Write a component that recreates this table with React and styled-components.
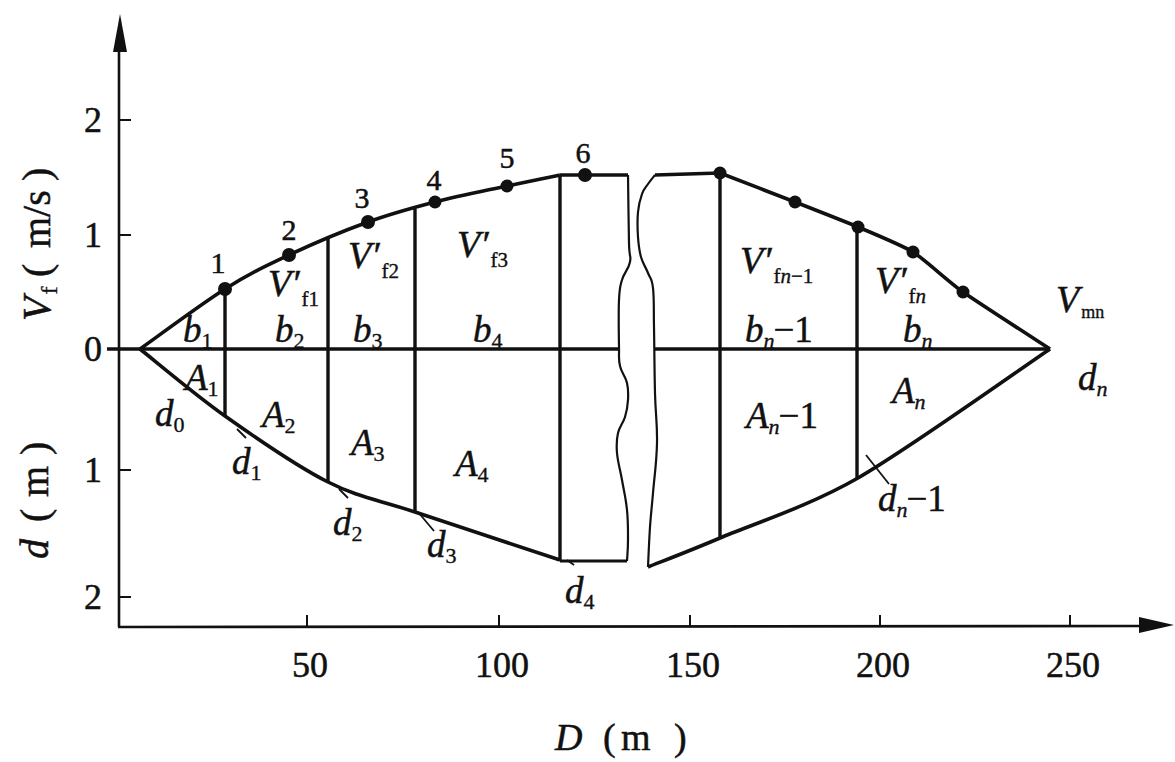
import React from "react";
import styled, { createGlobalStyle } from "styled-components";

const GlobalStyle = createGlobalStyle`
  html, body { margin: 0; padding: 0; background: #ffffff; }
  #root { width: 1175px; height: 762px; }
`;

const Figure = styled.figure`
  margin: 0;
  width: 1175px;
  height: 762px;
  background: #ffffff;
  overflow: hidden;
`;

const Chart = styled.svg`
  display: block;
  width: 1175px;
  height: 762px;
`;

const Stroke = styled.path`
  fill: none;
  stroke: #111;
  stroke-width: ${(p) => p.$w || 3.5}px;
  stroke-linejoin: round;
  stroke-linecap: butt;
`;

const Arrow = styled.polygon`
  fill: #111;
`;

const Dot = styled.circle`
  fill: #111;
`;

const Serif = styled.text`
  font-family: "Liberation Serif", "Times New Roman", serif;
  font-size: ${(p) => p.$size || 36}px;
  font-style: ${(p) => (p.$italic ? "italic" : "normal")};
  fill: #111;
  stroke: #111;
  stroke-width: ${(p) => p.$bold || 0.5}px;
  text-anchor: ${(p) => p.$anchor || "start"};
`;

const Sub = styled.tspan`
  font-size: ${(p) => p.$size || 22}px;
  font-style: ${(p) => (p.$italic ? "italic" : "normal")};
  stroke-width: 0.35px;
`;

const Plain = styled.tspan`
  font-style: normal;
`;

const Ital = styled.tspan`
  font-style: italic;
`;

/* smooth path through points (Catmull-Rom -> cubic Bezier) */
function smooth(pts, t = 0.5) {
  let d = `M${pts[0][0]},${pts[0][1]}`;
  for (let i = 0; i < pts.length - 1; i++) {
    const p0 = pts[i - 1] || pts[i];
    const p1 = pts[i];
    const p2 = pts[i + 1];
    const p3 = pts[i + 2] || p2;
    const c1x = p1[0] + ((p2[0] - p0[0]) / 6) * t * 2;
    const c1y = p1[1] + ((p2[1] - p0[1]) / 6) * t * 2;
    const c2x = p2[0] - ((p3[0] - p1[0]) / 6) * t * 2;
    const c2y = p2[1] - ((p3[1] - p1[1]) / 6) * t * 2;
    d += ` C${c1x.toFixed(1)},${c1y.toFixed(1)} ${c2x.toFixed(1)},${c2y.toFixed(1)} ${p2[0]},${p2[1]}`;
  }
  return d;
}

const line = (pts) => "M" + pts.map((p) => p.join(",")).join(" L");

const ZERO = 349;
const AX = 119;
const AY = 627;

const upperLeft = [
  [140, ZERO],
  [225, 289],
  [289, 255],
  [368, 222],
  [435, 202],
  [507, 186],
  [560, 175],
];
const lowerLeft = [
  [140, ZERO],
  [225, 416],
  [328, 482],
  [415, 512],
  [560, 560],
];
const upperRight = [
  [720, 173],
  [795, 202],
  [858, 227],
  [913, 252],
  [963, 292],
  [1050, ZERO],
];
const lowerRight = [
  [648, 567],
  [720, 538],
  [858, 478],
  [1050, ZERO],
];

const breakLeft = [
  [628, 175],
  [629, 243],
  [630, 262],
  [622, 280],
  [619, 300],
  [619, 347],
  [620, 366],
  [627, 383],
  [628, 400],
  [625, 417],
  [618, 433],
  [617, 453],
  [622, 480],
  [627, 510],
  [628, 540],
  [627, 561],
];
const breakRight = [
  [655, 175],
  [648, 184],
  [642, 194],
  [638, 212],
  [638, 237],
  [641, 257],
  [648, 273],
  [653, 288],
  [654, 327],
  [655, 393],
  [657, 443],
  [653, 493],
  [650, 527],
  [648, 567],
];

const verticals = [
  { x: 225, top: 289, bottom: 416 },
  { x: 328, top: 238, bottom: 482 },
  { x: 415, top: 209, bottom: 512 },
  { x: 560, top: 175, bottom: 561 },
  { x: 720, top: 173, bottom: 538 },
  { x: 857, top: 227, bottom: 478 },
];

const dots = [
  [225, 289, 7],
  [289, 255, 7],
  [368, 222, 7],
  [435, 202, 6.5],
  [507, 186, 6.5],
  [585, 175, 7],
  [720, 173, 6.5],
  [795, 202, 6.5],
  [858, 227, 6.5],
  [913, 252, 6.5],
  [963, 292, 6.5],
];

const pointNumbers = [
  { n: "1", x: 218, y: 273 },
  { n: "2", x: 289, y: 240 },
  { n: "3", x: 362, y: 208 },
  { n: "4", x: 434, y: 190 },
  { n: "5", x: 507, y: 168 },
  { n: "6", x: 583, y: 163 },
];

const yTicks = [
  { label: "2", y: 120 },
  { label: "1", y: 235 },
  { label: "0", y: ZERO },
  { label: "1", y: 470 },
  { label: "2", y: 597 },
];

const xTicks = [
  { label: "50", x: 307 },
  { label: "100", x: 499 },
  { label: "150", x: 690 },
  { label: "200", x: 880 },
  { label: "250", x: 1070 },
];

/* variable labels: main letter, subscript, optional trailing text */
const varLabels = [
  { m: "b", s: "1", x: 183, y: 342 },
  { m: "b", s: "2", x: 275, y: 342 },
  { m: "b", s: "3", x: 353, y: 342 },
  { m: "b", s: "4", x: 473, y: 342 },
  { m: "b", s: "n", si: true, tail: "−1", x: 745, y: 342 },
  { m: "b", s: "n", si: true, x: 903, y: 342 },
  { m: "A", s: "1", x: 185, y: 390 },
  { m: "A", s: "2", x: 262, y: 427 },
  { m: "A", s: "3", x: 351, y: 455 },
  { m: "A", s: "4", x: 455, y: 476 },
  { m: "A", s: "n", si: true, tail: "−1", x: 746, y: 428 },
  { m: "A", s: "n", si: true, x: 892, y: 403 },
  { m: "d", s: "0", x: 155, y: 426 },
  { m: "d", s: "1", x: 232, y: 474 },
  { m: "d", s: "2", x: 333, y: 535 },
  { m: "d", s: "3", x: 427, y: 557 },
  { m: "d", s: "4", x: 565, y: 603 },
  { m: "d", s: "n", si: true, x: 1078, y: 390 },
  { m: "d", s: "n", si: true, tail: "−1", x: 878, y: 511 },
];

const velLabels = [
  { x: 268, y: 296, sub: "1" },
  { x: 348, y: 268, sub: "2" },
  { x: 457, y: 257, sub: "3" },
  { x: 740, y: 273, sub: "n", tail: "−1" },
  { x: 875, y: 293, sub: "n" },
];

const leaders = [
  [[237, 429], [246, 438]],
  [[339, 489], [348, 498]],
  [[418, 512], [434, 531]],
  [[567, 560], [574, 565]],
  [[866, 455], [889, 484]],
];

function VarLabel({ m, s, si, tail, x, y }) {
  return (
    <Serif x={x} y={y} $italic $size={37}>
      {m}
      <Sub dy={6} $italic={si} $size={22}>
        {s}
      </Sub>
      {tail ? (
        <Plain dy={-6} dx={-1}>
          {tail}
        </Plain>
      ) : null}
    </Serif>
  );
}

function VelLabel({ x, y, sub, tail }) {
  const italicSub = sub === "n";
  return (
    <Serif x={x} y={y} $italic $size={38}>
      {"V′"}
      <Sub dy={10} dx={2} $size={21}>
        <Plain>f</Plain>
        {italicSub ? <Ital>{sub}</Ital> : <Plain>{sub}</Plain>}
        {tail ? <Plain>{tail}</Plain> : null}
      </Sub>
    </Serif>
  );
}

export default function App() {
  return (
    <>
      <GlobalStyle />
      <Figure>
        <Chart viewBox="0 0 1175 762" xmlns="http://www.w3.org/2000/svg">
          {/* axes */}
          <Stroke $w={2.6} d={line([[AX, AY], [AX, 46]])} />
          <Arrow points={`${AX + 1},14 ${AX - 6},52 ${AX + 8},52`} />
          <Stroke $w={2.6} d={line([[AX - 1, AY], [1145, AY - 1]])} />
          <Arrow points={`1174,625 1139,617 1139,633`} />

          {yTicks.map((t, i) =>
            t.label === "0" ? null : (
              <Stroke key={"yt" + i} $w={2} d={line([[AX, t.y], [AX + 12, t.y]])} />
            )
          )}
          {xTicks.map((t, i) => (
            <Stroke key={"xt" + i} $w={2} d={line([[t.x, AY], [t.x, AY - 12]])} />
          ))}

          {/* zero line, broken at the gap */}
          <Stroke $w={3.5} d={line([[107, ZERO], [619, ZERO]])} />
          <Stroke $w={3.5} d={line([[655, ZERO], [1050, ZERO]])} />

          {/* envelope curves */}
          <Stroke $w={3.6} d={smooth(upperLeft)} />
          <Stroke $w={3.6} d={line([[560, 175], [628, 175]])} />
          <Stroke $w={3.6} d={smooth(lowerLeft)} />
          <Stroke $w={3.2} d={line([[560, 561], [627, 561]])} />
          <Stroke $w={3.6} d={line([[655, 175], [720, 173]])} />
          <Stroke $w={3.6} d={smooth(upperRight, 0.3)} />
          <Stroke $w={3.6} d={smooth(lowerRight, 0.45)} />

          {/* break lines */}
          <Stroke $w={2.2} d={smooth(breakLeft, 0.6)} />
          <Stroke $w={2.2} d={smooth(breakRight, 0.6)} />

          {/* verticals */}
          {verticals.map((v, i) => (
            <Stroke key={"v" + i} $w={3.4} d={line([[v.x, v.top], [v.x, v.bottom]])} />
          ))}

          {/* leader ticks */}
          {leaders.map((l, i) => (
            <Stroke key={"l" + i} $w={1.8} d={line(l)} />
          ))}

          {dots.map(([cx, cy, r], i) => (
            <Dot key={"d" + i} cx={cx} cy={cy} r={r} />
          ))}

          {/* point numbers */}
          {pointNumbers.map((p) => (
            <Serif key={"pn" + p.n} x={p.x} y={p.y} $size={30} $anchor="middle">
              {p.n}
            </Serif>
          ))}

          {/* tick labels */}
          {yTicks.map((t, i) => (
            <Serif key={"yl" + i} x={102} y={t.y + 12} $size={36} $anchor="end">
              {t.label}
            </Serif>
          ))}
          {xTicks.map((t, i) => (
            <Serif key={"xl" + i} x={t.x + 3} y={677} $size={36} $anchor="middle">
              {t.label}
            </Serif>
          ))}

          {/* area / width / depth labels */}
          {varLabels.map((v, i) => (
            <VarLabel key={"vl" + i} {...v} />
          ))}
          {velLabels.map((v, i) => (
            <VelLabel key={"vel" + i} {...v} />
          ))}

          <Serif x={1056} y={312} $italic $size={38}>
            V
            <Sub dy={6} dx={2} $size={18}>
              mn
            </Sub>
          </Serif>

          {/* axis titles */}
          <Serif x={555} y={750} $size={38}>
            <Ital>D</Ital>
            <Plain x={603}>(</Plain>
            <Plain x={621}>m</Plain>
            <Plain x={674}>)</Plain>
          </Serif>

          <Serif transform="translate(50,321) rotate(-90)" x={0} y={0} $size={40}>
            <Ital>V</Ital>
            <Sub dy={7} dx={2} $size={24}>
              f
            </Sub>
            <Plain x={44} dy={-7}>
              (
            </Plain>
            <Plain x={73}>m/s</Plain>
            <Plain x={140}>)</Plain>
          </Serif>

          <Serif transform="translate(48,559) rotate(-90)" x={0} y={0} $size={40}>
            <Ital>d</Ital>
            <Plain x={37}>(</Plain>
            <Plain x={62}>m</Plain>
            <Plain x={104}>)</Plain>
          </Serif>
        </Chart>
      </Figure>
    </>
  );
}
